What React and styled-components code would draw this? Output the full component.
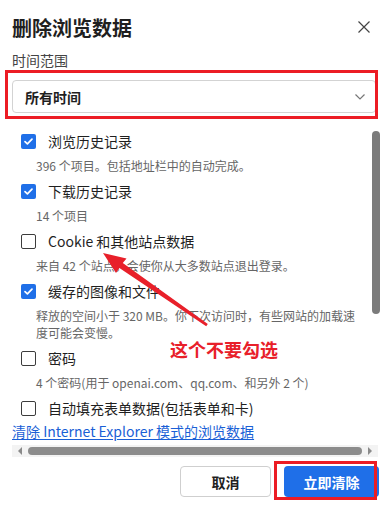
import styled, { createGlobalStyle } from "styled-components";

const GlobalStyle = createGlobalStyle`
  html, body {
    margin: 0;
    padding: 0;
    background: #fff;
  }
  body {
    font-family: "Noto Sans CJK SC", "Noto Sans", sans-serif;
    color: #202124;
  }
`;

const items = [
  { label: "浏览历史记录", desc: "396 个项目。包括地址栏中的自动完成。", checked: true },
  { label: "下载历史记录", desc: "14 个项目", checked: true },
  { label: "Cookie 和其他站点数据", desc: "来自 42 个站点。会使你从大多数站点退出登录。", checked: false },
  {
    label: "缓存的图像和文件",
    desc: "释放的空间小于 320 MB。你下次访问时，有些网站的加载速度可能会变慢。",
    checked: true,
  },
  { label: "密码", desc: "4 个密码(用于 openai.com、qq.com、和另外 2 个)", checked: false },
  { label: "自动填充表单数据(包括表单和卡)", checked: false },
];

const CheckBox = ({ checked }) => (
  <Box $checked={checked}>
    {checked && (
      <svg width="15" height="15" viewBox="0 0 15 15">
        <path
          d="M4 7.6 L6.4 9.9 L11 5.1"
          fill="none"
          stroke="#fff"
          strokeWidth="1.7"
          strokeLinecap="round"
          strokeLinejoin="round"
        />
      </svg>
    )}
  </Box>
);

const App = () => {
  return (
    <Dialog>
      <GlobalStyle />
      <Header>
        <Title>删除浏览数据</Title>
        <CloseButton>
          <svg width="12" height="12" viewBox="0 0 12 12">
            <path d="M0.5 0.5 L11.5 11.5 M11.5 0.5 L0.5 11.5" stroke="#444" strokeWidth="1.2" />
          </svg>
        </CloseButton>
      </Header>

      <FieldLabel>时间范围</FieldLabel>
      <Highlight $top={10} $left={7} $right={-2} $bottom={6}>
        <Select>
          <span>所有时间</span>
          <svg width="10" height="6" viewBox="0 0 10 6">
            <path d="M0.5 0.5 L5 5 L9.5 0.5" fill="none" stroke="#777" strokeWidth="1.2" />
          </svg>
        </Select>
      </Highlight>

      <ScrollArea>
        <Content>
          {items.map((item) => (
            <Item key={item.label}>
              <ItemRow>
                <CheckBox checked={item.checked} />
                <ItemLabel>{item.label}</ItemLabel>
              </ItemRow>
              {item.desc && <ItemDesc>{item.desc}</ItemDesc>}
            </Item>
          ))}
          <Link>清除 Internet Explorer 模式的浏览数据</Link>
        </Content>
        <VTrack>
          <VThumb />
        </VTrack>
      </ScrollArea>

      <HScroll>
        <ArrowLeft />
        <HThumb />
        <ArrowRight />
      </HScroll>

      <Footer>
        <CancelButton>取消</CancelButton>
        <Highlight $top={5} $left={10} $right={2} $bottom={3}>
          <PrimaryButton>立即清除</PrimaryButton>
        </Highlight>
      </Footer>

      <ArrowOverlay width="390" height="506" viewBox="0 0 390 506">
        <polygon
          points="103,253 126.5,258.5 122.8,263 207.8,324 206.2,326.2 119.4,268 116,273"
          fill="#e8202a"
        />
      </ArrowOverlay>
      <Note>这个不要勾选</Note>
    </Dialog>
  );
};

const Dialog = styled.div`
  position: relative;
  width: 390px;
  height: 506px;
  display: flex;
  flex-direction: column;
  overflow: hidden;
  background: #fff;
`;

const Header = styled.div`
  display: flex;
  justify-content: space-between;
  align-items: center;
  padding: 14px 20px 0 12px;
  height: 28px;
`;

const Title = styled.h1`
  margin: 0;
  font-size: 20px;
  font-weight: 700;
  line-height: 28px;
  color: #1f1f1f;
`;

const CloseButton = styled.div`
  display: flex;
  width: 12px;
  height: 12px;
  margin-top: -2px;
`;

const FieldLabel = styled.div`
  margin: 8px 0 0 12px;
  font-size: 14px;
  line-height: 20px;
  color: #444;
`;

const Highlight = styled.div`
  position: relative;
  &::after {
    content: "";
    position: absolute;
    top: -${(p) => p.$top}px;
    left: -${(p) => p.$left}px;
    right: ${(p) => p.$right}px;
    bottom: -${(p) => p.$bottom}px;
    border: 3px solid #ec1c24;
    pointer-events: none;
  }
  ${Dialog} > & {
    margin: 10px 14px 0 12px;
  }
`;

const Select = styled.div`
  display: flex;
  align-items: center;
  justify-content: space-between;
  height: 31px;
  padding: 0 10px 0 12px;
  border: 1px solid #d3d3d3;
  border-radius: 4px;
  font-size: 14px;
  font-weight: 700;
  color: #1f1f1f;
`;

const ScrollArea = styled.div`
  display: flex;
  margin: 9px 10px 0 12px;
  height: 321px;
`;

const Content = styled.div`
  flex: 1;
  padding-top: 6px;
  display: flex;
  flex-direction: column;
`;

const Item = styled.div`
  display: flex;
  flex-direction: column;
`;

const ItemRow = styled.div`
  display: flex;
  align-items: center;
  height: 26px;
  padding-left: 9px;
  gap: 12px;
`;

const Box = styled.div`
  box-sizing: border-box;
  width: 15px;
  height: 15px;
  border-radius: 2px;
  display: flex;
  background: ${(p) => (p.$checked ? "#1f6fe8" : "#fff")};
  border: ${(p) => (p.$checked ? "none" : "1px solid #3c3c3c")};
`;

const ItemLabel = styled.span`
  font-size: 14px;
  line-height: 20px;
  color: #1f1f1f;
`;

const ItemDesc = styled.div`
  margin: 3px 14px 4px 24px;
  font-size: 12px;
  line-height: 17px;
  color: #666;
`;

const Link = styled.a`
  font-size: 14px;
  line-height: 20px;
  color: #1a5fd6;
  text-decoration: underline;
  text-underline-offset: 2px;
  white-space: nowrap;
`;

const VTrack = styled.div`
  width: 8px;
  display: flex;
  flex-direction: column;
`;

const VThumb = styled.div`
  margin-top: 9px;
  height: 183px;
  border-radius: 4px;
  background: #7b7b7b;
`;

const HScroll = styled.div`
  display: flex;
  align-items: center;
  gap: 6px;
  margin: 2px 12px 0 12px;
  height: 12px;
  padding: 0 6px;
  background: #f3f3f3;
`;

const ArrowLeft = styled.div`
  width: 0;
  height: 0;
  border-top: 4px solid transparent;
  border-bottom: 4px solid transparent;
  border-right: 4px solid #8a8a8a;
`;

const ArrowRight = styled.div`
  width: 0;
  height: 0;
  border-top: 4px solid transparent;
  border-bottom: 4px solid transparent;
  border-left: 4px solid #8a8a8a;
`;

const HThumb = styled.div`
  flex: 1;
  height: 8px;
  border-radius: 4px;
  background: #8c8c8c;
`;

const Footer = styled.div`
  display: flex;
  justify-content: flex-end;
  gap: 13px;
  margin-top: 9px;
  padding-right: 11px;
`;

const Button = styled.div`
  height: 31px;
  border-radius: 4px;
  display: flex;
  align-items: center;
  justify-content: center;
  font-size: 14px;
  font-weight: 700;
`;

const CancelButton = styled(Button)`
  box-sizing: border-box;
  width: 91px;
  border: 1px solid #cfcfcf;
  color: #1f1f1f;
  background: #fff;
`;

const PrimaryButton = styled(Button)`
  width: 95px;
  color: #fff;
  background: #1f6fe8;
`;

const ArrowOverlay = styled.svg`
  position: absolute;
  top: 0;
  left: 0;
  pointer-events: none;
`;

const Note = styled.div`
  position: absolute;
  left: 170px;
  top: 341px;
  font-size: 18px;
  font-weight: 700;
  line-height: 17px;
  color: #e8202a;
`;

export default App;
